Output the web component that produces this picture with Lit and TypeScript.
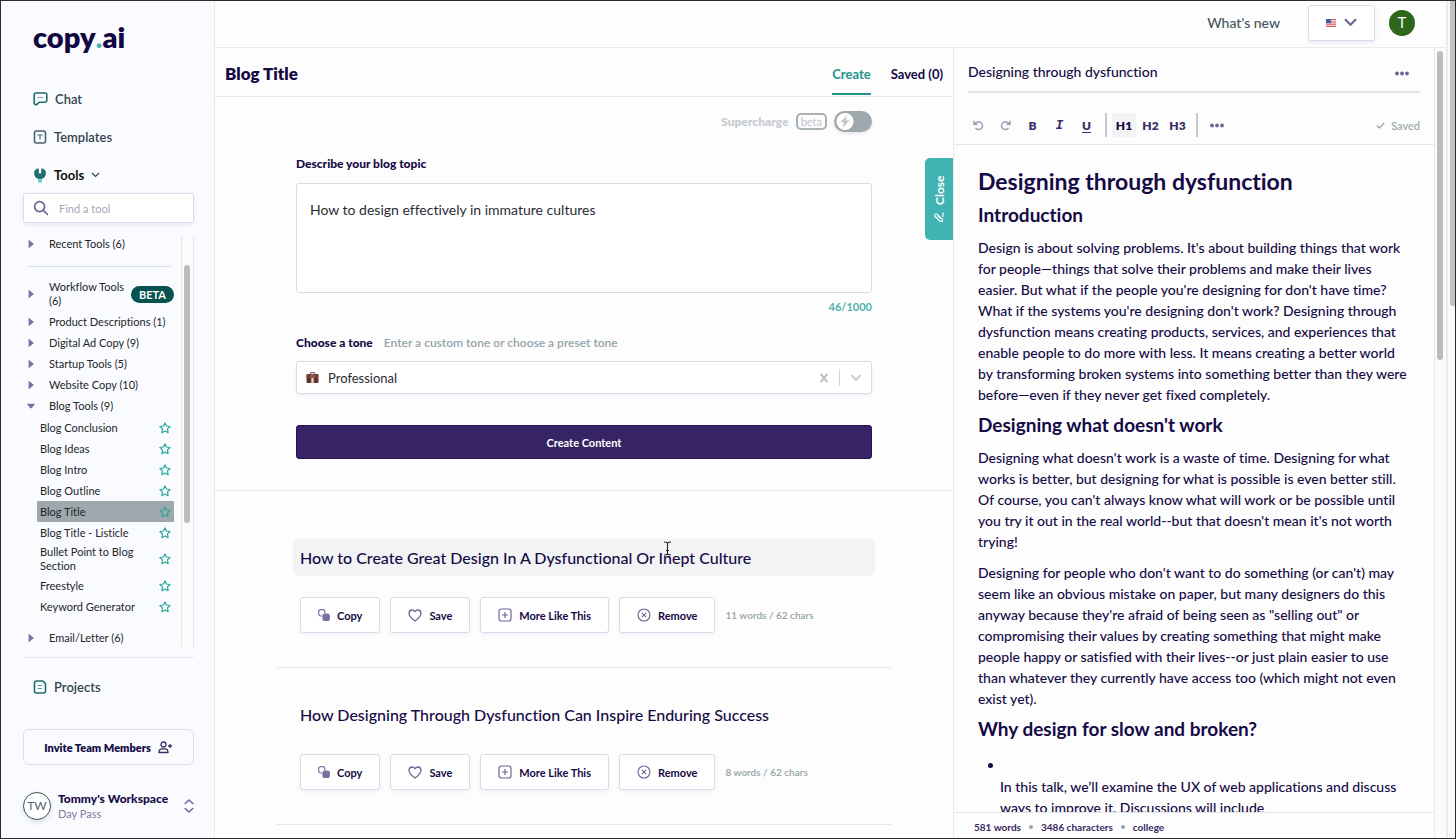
import { LitElement, html, css, nothing } from "lit";
import { customElement, state } from "lit/decorators.js";
import { classMap } from "lit/directives/class-map.js";

const star = html`<svg class="star" width="12" height="12" viewBox="0 0 12 12" fill="none" stroke="#2aa79b" stroke-width="1.200" stroke-linejoin="round"><path d="M6 .9 7.500 4l3.600.5-2.600 2.400.6 3.800L6 9 2.900 10.700l.6-3.800L.9 4.500 4.500 4z"/></svg>`;
const caretRight = html`<svg width="8" height="8" viewBox="0 0 8 8" fill="#7a70a0"><path d="M1.600.6Q1.600-.2 2.300.3L6.300 3.400Q7 4 6.300 4.600L2.300 7.700Q1.600 8.200 1.600 7.400z"/></svg>`;
const caretDown = html`<svg width="8" height="8" viewBox="0 0 8 8" fill="#7a70a0"><path d="M.4 1.800h7.200Q8.200 1.800 7.700 2.500L4.800 6Q4 6.800 3.200 6L.3 2.500Q-.2 1.800.4 1.800z"/></svg>`;
const dots = (c: string) => html`<svg width="14" height="5" viewBox="0 0 14 5" fill=${c}><circle cx="2" cy="2.500" r="1.900"/><circle cx="7" cy="2.500" r="1.900"/><circle cx="12" cy="2.500" r="1.900"/></svg>`;

const chatIcon = html`<svg width="15" height="14" viewBox="0 0 15 14" fill="none" stroke="#1d6e6b" stroke-width="1.600" stroke-linejoin="round"><path d="M2.800 1h9.400a1.600 1.600 0 0 1 1.600 1.600v6a1.600 1.600 0 0 1-1.600 1.600H6.500L3.600 12.600Q1.200 13 1.200 11V2.600A1.600 1.600 0 0 1 2.800 1z"/><path d="M4.300 5.500h6" stroke="#7fb0ad" stroke-width="1.200"/></svg>`;
const templateIcon = html`<svg width="14" height="14" viewBox="0 0 14 14" fill="none" stroke="#476374" stroke-width="1.600"><rect x="1.500" y="1" width="11" height="12" rx="2"/><path d="M4.500 5h5M7 5v4.500" stroke="#6f98a3"/></svg>`;
const toolsIcon = html`<svg width="14" height="15" viewBox="0 0 14 15"><path d="M5 8h4v5.500a1 1 0 0 1-1 1H6a1 1 0 0 1-1-1z" fill="#63d0c0"/><path d="M3.500.8 5.800.5V5q1.200 1 2.400 0V.5l2.300.3Q13 2.500 12.900 5.500 12.500 9.800 9 10.800H5Q1.500 9.800 1.100 5.500 1 2.500 3.500.8z" fill="#1f6f6c"/></svg>`;
const projectIcon = html`<svg width="14" height="14" viewBox="0 0 14 14" fill="none" stroke="#1d6e6b" stroke-width="1.600"><path d="M3.500 1h6.300L12.500 3.700V11a2 2 0 0 1-2 2h-7a2 2 0 0 1-2-2V3a2 2 0 0 1 2-2z"/><path d="M4.500 5.500h4.500M4.500 8.500h4.500" stroke="#5fa3a0" stroke-width="1.200"/></svg>`;
const searchIcon = html`<svg width="16" height="16" viewBox="0 0 16 16" fill="none" stroke="#6f6495" stroke-width="1.700" stroke-linecap="round"><circle cx="6.600" cy="6.600" r="5"/><path d="m10.300 10.300 4.200 4.200"/></svg>`;

const copyIcon = html`<svg width="12" height="12" viewBox="0 0 12 12" fill="none" stroke="#796fa0" stroke-width="1.200"><path d="M4.400 7H2.900Q.7 7 .7 4.800V2.700Q.7.7 2.700.7h2.100q2 0 2 2v1.900"/><rect x="5" y="5.200" width="6.300" height="6.300" rx="1.800" fill="#796fa0"/></svg>`;
const heartIcon = html`<svg width="14" height="13" viewBox="0 0 14 13" fill="none" stroke="#6f6495" stroke-width="1.300" stroke-linejoin="round"><path d="M7 12Q1 8 1 4.300 1.200 1 4 1 6 1 7 2.800 8 1 10 1q2.800 0 3 3.300Q13 8 7 12z"/></svg>`;
const plusIcon = html`<svg width="14" height="14" viewBox="0 0 14 14" fill="none" stroke="#6f6495" stroke-width="1.200"><rect x="1" y="1" width="12" height="12" rx="2.500"/><path d="M7 4v6M4 7h6"/></svg>`;
const removeIcon = html`<svg width="14" height="14" viewBox="0 0 14 14" fill="none" stroke="#6f6495" stroke-width="1.100"><circle cx="7" cy="7" r="6"/><path d="m4.900 4.900 4.200 4.200M9.100 4.900 4.900 9.100"/></svg>`;

interface Result {
  title: string;
  meta: string;
  active?: boolean;
}

@customElement("tool-sidebar")
export class ToolSidebar extends LitElement {
  static styles = css`
    * { box-sizing: border-box; }
    :host {
      display: flex; flex-direction: column; min-height: 0; padding: 0 20px 18px 22px;
      background: #fafbfe; border-right: 1px solid #dfeee6; color: #34454d;
    }
    button, input { font: inherit; color: inherit; background: none; border: 0; padding: 0; margin: 0; }
    a { color: inherit; text-decoration: none; }
    .logo { margin: 18px 0 0 10px; font-size: 29px; line-height: 36px; font-weight: 800; color: #100641; }
    .logo .dot { color: #3fb5b3; font-weight: 900; }
    .nav { display: flex; flex-direction: column; gap: 18px; margin-top: 34px; padding-left: 10px; }
    .nav-item { display: flex; align-items: center; gap: 7px; height: 20px; font-size: 13px; line-height: 20px; font-weight: 600; }
    .nav-item svg { flex: none; }
    .nav-item.current { color: #0d0d0d; font-weight: 700; }
    .search {
      display: flex; align-items: center; gap: 10px; height: 30px; margin-top: 8px; padding: 0 9px;
      background: #fff; border: 1px solid #dcd9e8; border-radius: 3px; box-shadow: 0 2px 5px #e4e9f4;
    }
    .search input { flex: 1; min-width: 0; font-size: 11px; outline: 0; }
    .search input::placeholder { color: #a9a5b8; opacity: 1; }
    .list { flex: 1; min-height: 0; display: flex; margin-top: 13px; }
    .tree { flex: 1; min-width: 0; overflow: hidden; padding: 0 7px 0 4px; color: #222629; font-size: 11px; }
    .track { width: 13px; border: solid #e4e6ea; border-width: 0 1px; padding: 29px 3px 0 2px; background: #fbfbfb; }
    .thumb { height: 258px; border-radius: 3px; background: #bdbdbd; }
    .cat { display: flex; align-items: center; gap: 14px; width: 100%; height: 21px; line-height: 14px; text-align: left; }
    .cat svg { flex: none; }
    .cat.first { height: 16px; }
    .cat.tall { height: 30px; margin-bottom: 2px; }
    .cat.last { margin-top: 10px; }
    .cat .label { flex: 1; white-space: nowrap; }
    .cat.tall .label { white-space: normal; }
    .beta { padding: 0 8px; margin-left: -9px; height: 17px; line-height: 17px; border-radius: 9px; background: #07514f; color: #fff; font-weight: 700; }
    .rule { border: 0; border-top: 1px solid #d9dfea; margin: 14px 3px 12px 0; }
    .tools { list-style: none; margin: 1px 0 0; padding: 0 0 0 10px; }
    .tool { display: flex; align-items: center; justify-content: space-between; min-height: 21px; padding: 0 3px; line-height: 14px; }
    .tool a { max-width: 96px; }
    .tool.wrap { min-height: 32px; }
    .tool.sel { background: #9fa8ad; border-radius: 1px; }
    .foot { margin-top: 10px; padding-top: 19px; border-top: 1px solid #e3e7ef; }
    .projects { padding-left: 10px; }
    .invite {
      display: flex; align-items: center; justify-content: center; gap: 7px; width: 100%; height: 36px; margin-top: 32px;
      border: 1px solid #e2dee9; border-radius: 6px; font-size: 11px; font-weight: 800; color: #150a45;
    }
    .workspace { display: flex; align-items: center; width: 100%; margin-top: 26px; height: 29px; text-align: left; }
    .avatar { width: 28px; height: 28px; flex: none; border: 1px solid #41555c; border-radius: 50%; background: #fff; box-shadow: 0 2px 5px #d5dde4; display: grid; place-items: center; font-size: 12px; color: #54666e; }
    .who { flex: 1; margin-left: 7px; white-space: nowrap; }
    .name { display: block; font-size: 12px; line-height: 16px; font-weight: 900; color: #150a45; }
    .plan { display: block; font-size: 11px; line-height: 14px; color: #8078a3; }
  `;

  private cats = ["Product Descriptions (1)", "Digital Ad Copy (9)", "Startup Tools (5)", "Website Copy (10)"];
  private tools = ["Blog Conclusion", "Blog Ideas", "Blog Intro", "Blog Outline", "Blog Title", "Blog Title - Listicle", "Bullet Point to Blog Section", "Freestyle", "Keyword Generator"];

  render() {
    return html`
      <div class="logo">copy<span class="dot">.</span>ai</div>
      <nav class="nav">
        <a class="nav-item" href="#chat">${chatIcon}Chat</a>
        <a class="nav-item" href="#templates">${templateIcon}<span>Templates</span></a>
        <a class="nav-item current" href="#tools">${toolsIcon}<span>Tools</span>
          <svg width="9" height="6" viewBox="0 0 9 6" fill="none" stroke="#34454d" stroke-width="1.200"><path d="m1 1 3.500 3.500L8 1"/></svg></a>
      </nav>
      <label class="search">${searchIcon}<input type="text" placeholder="Find a tool" aria-label="Find a tool" /></label>
      <div class="list">
        <div class="tree">
          <button class="cat first">${caretRight}<span class="label">Recent Tools (6)</span></button>
          <hr class="rule" />
          <button class="cat tall">${caretRight}<span class="label">Workflow Tools (6)</span><span class="beta">BETA</span></button>
          ${this.cats.map((c) => html`<button class="cat">${caretRight}<span class="label">${c}</span></button>`)}
          <button class="cat">${caretDown}<span class="label">Blog Tools (9)</span></button>
          <ul class="tools">
            ${this.tools.map((t) => html`<li class=${classMap({ tool: true, sel: t === "Blog Title", wrap: t.startsWith("Bullet") })}><a href="#tool">${t}</a>${star}</li>`)}
          </ul>
          <button class="cat last">${caretRight}<span class="label">Email/Letter (6)</span></button>
        </div>
        <div class="track"><div class="thumb"></div></div>
      </div>
      <div class="foot">
        <a class="nav-item projects" href="#projects">${projectIcon}Projects</a>
        <button class="invite">Invite Team Members
          <svg width="15" height="13" viewBox="0 0 15 13" fill="none" stroke="#3a3063" stroke-width="1.300"><circle cx="5.500" cy="3.500" r="2.500"/><path d="M1 11.500Q1 7.800 4 7.800h3q3 0 3 3.700zM12 3v4M10 5h4"/></svg>
        </button>
        <button class="workspace">
          <span class="avatar">TW</span>
          <span class="who"><span class="name">Tommy's Workspace</span><span class="plan">Day Pass</span></span>
          <svg width="10" height="14" viewBox="0 0 10 14" fill="none" stroke="#6f6495" stroke-width="1.500" stroke-linecap="round" stroke-linejoin="round"><path d="M1.200 4.500 5 1l3.800 3.500M1.200 9.500 5 13l3.800-3.500"/></svg>
        </button>
      </div>`;
  }
}

@customElement("blog-workspace")
export class BlogWorkspace extends LitElement {
  static styles = css`
    * { box-sizing: border-box; }
    :host { display: flex; flex-direction: column; min-width: 0; min-height: 0; position: relative; color: #150a45; }
    button, input, textarea, select { font: inherit; color: inherit; background: none; border: 0; padding: 0; margin: 0; }
    .head { display: flex; justify-content: space-between; height: 49px; flex: none; padding: 0 10px; border-bottom: 1px solid #e1ede6; }
    h1 { margin: 0; font-size: 17px; line-height: 52px; font-weight: 800; }
    .tabs { display: flex; gap: 20px; padding-top: 4px; }
    .tab { height: 43px; padding-top: 2px; font-size: 13px; font-weight: 700; border-bottom: 2px solid transparent; }
    .tab.on { color: #22928b; border-color: #22928b; }
    .scroll { flex: 1; min-height: 0; overflow: hidden; }
    .form { padding: 14px 81px 31px; border-bottom: 1px solid #dfeee6; }
    .super { display: flex; align-items: center; justify-content: flex-end; gap: 7px; height: 21px; }
    .super-label { display: flex; align-items: center; gap: 7px; color: #c9cbd3; font-size: 12px; font-weight: 800; }
    .beta { height: 17px; line-height: 14px; padding: 0 3px; border: 2px solid #a8b1b6; border-radius: 5px; color: #c2c4cd; font-size: 11px; font-weight: 400; }
    .switch { position: relative; display: flex; width: 38px; height: 21px; }
    .switch input { appearance: none; width: 38px; height: 21px; border-radius: 11px; background: radial-gradient(circle at 11px 50%, #fff 8px, #9ea8ac 9px); box-shadow: 0 2px 3px #e8eaee; }
    .switch svg { position: absolute; left: 5px; top: 4px; pointer-events: none; }
    .field-label { display: block; margin: 24px 0 11px; font-size: 12px; line-height: 16px; font-weight: 900; }
    textarea { display: block; width: 100%; height: 110px; resize: none; padding: 15px 13px; border: 1px solid #dcd9e8; border-radius: 3px; font-size: 14px; line-height: 21px; color: #2a2c33; background: #fff; outline: 0; }
    .count { margin-top: 6px; text-align: right; font-size: 11px; line-height: 16px; font-weight: 700; color: #4cb3ae; }
    .tone-label { display: flex; gap: 11px; margin: 20px 0 10px; font-size: 12px; line-height: 16px; font-weight: 900; }
    .hint { font-weight: 600; color: #94a3ac; }
    .tone { display: flex; align-items: center; height: 33px; padding: 0 9px; border: 1px solid #dcd9e8; border-radius: 3px; background: #fff; box-shadow: 0 2px 4px #eef2f6; }
    .tone select { appearance: none; flex: 1; min-width: 0; margin-left: 9px; font-size: 13px; color: #2a2c33; outline: 0; }
    .tone .clear { display: flex; }
    .bar { width: 1px; height: 17px; margin: 0 10px; background: #d3d3d9; }
    .create { display: block; width: 100%; height: 34px; margin-top: 31px; border: 1px solid #241457; border-radius: 3px; background: #362465; color: #fff; font-size: 11px; font-weight: 700; }
    .results { padding: 20px 61px 0; }
    .result { padding: 28px 17px 34px; border-bottom: 1px solid #dfeee6; }
    .result h2 { position: relative; margin: 0; padding: 0 7px; border-radius: 5px; font-size: 16px; line-height: 37px; font-weight: 500; }
    .result h2.on { background: #f2f3f5; }
    .cursor { position: absolute; left: 370px; top: 2px; }
    .actions { display: flex; align-items: center; gap: 10px; margin-top: 21px; padding-left: 7px; }
    .act { display: flex; align-items: center; gap: 7px; height: 36px; padding: 0 17px; border: 1px solid #dcd9e8; border-radius: 3px; background: #fff; box-shadow: 0 2px 4px #eef2f6; font-size: 11px; font-weight: 700; white-space: nowrap; }
    .meta { font-size: 10px; font-weight: 600; color: #94a3a8; white-space: nowrap; }
    .close { position: absolute; right: 0; top: 110px; display: flex; align-items: center; justify-content: center; gap: 7px; width: 28px; height: 82px; border-radius: 0 5px 5px 0; background: #40b3b2; color: #fff; writing-mode: vertical-rl; transform: rotate(180deg); font-size: 12px; font-weight: 700; }
    .close svg { transform: rotate(90deg); }
  `;

  @state() private topic = "How to design effectively in immature cultures";
  private results: Result[] = [
    { title: "How to Create Great Design In A Dysfunctional Or Inept Culture", meta: "11 words / 62 chars", active: true },
    { title: "How Designing Through Dysfunction Can Inspire Enduring Success", meta: "8 words / 62 chars" },
  ];

  private onInput(e: Event) {
    this.topic = (e.target as HTMLTextAreaElement).value;
  }

  render() {
    return html`
      <div class="head">
        <h1>Blog Title</h1>
        <div class="tabs"><button class="tab on">Create</button><button class="tab">Saved (0)</button></div>
      </div>
      <div class="scroll">
        <div class="form">
          <div class="super">
            <label class="super-label" for="super">Supercharge <span class="beta">beta</span></label>
            <span class="switch"><input id="super" type="checkbox" role="switch" />
              <svg width="12" height="13" viewBox="0 0 12 13" fill="#c3c3c7"><path d="M8 .5 1.200 7.200h3.600L3.500 12.500 10.800 5.500H7z"/></svg></span>
          </div>
          <label class="field-label" for="topic">Describe your blog topic</label>
          <textarea id="topic" .value=${this.topic} @input=${this.onInput}></textarea>
          <div class="count">${this.topic.length}/1000</div>
          <label class="tone-label" for="tone">Choose a tone <span class="hint">Enter a custom tone or choose a preset tone</span></label>
          <div class="tone">
            <svg width="13" height="13" viewBox="0 0 13 13"><path d="M4.500 3V1.600h4V3" fill="none" stroke="#6e5a55"/><rect x=".5" y="3" width="12" height="9" rx="1" fill="#6b3a2c"/><rect x=".5" y="3" width="12" height="4" rx="1" fill="#8a5645"/><path d="M2.800 3v9M10.200 3v9" stroke="#47241b"/><rect x="5.300" y="7" width="2.400" height="5" fill="#d8cfd0"/></svg>
            <select id="tone"><option>Professional</option></select>
            <button class="clear" aria-label="Clear"><svg width="10" height="10" viewBox="0 0 10 10" fill="none" stroke="#c0c0c4" stroke-width="2"><path d="m1.500 .8 7 8.400M8.500 .8l-7 8.400"/></svg></button>
            <span class="bar"></span>
            <svg width="12" height="8" viewBox="0 0 12 8" fill="none" stroke="#c6c6ca" stroke-width="1.800"><path d="m1.500 1.200 4.500 4.600 4.500-4.600"/></svg>
          </div>
          <button class="create">Create Content</button>
        </div>
        <div class="results">
          ${this.results.map((r) => html`
            <article class="result">
              <h2 class=${classMap({ on: !!r.active })}>${r.title}${r.active ? html`<svg class="cursor" width="9" height="15" viewBox="0 0 9 15" fill="none" stroke="#26262b" stroke-width="1.100"><path d="M1 1q2.500 0 3.500 1.200Q5.500 1 8 1M4.500 2v11M1 14q2.500 0 3.500-1.200Q5.500 14 8 14M3 9.500h3"/></svg>` : nothing}</h2>
              <div class="actions">
                <button class="act">${copyIcon}Copy</button>
                <button class="act">${heartIcon}Save</button>
                <button class="act">${plusIcon}More Like This</button>
                <button class="act">${removeIcon}Remove</button>
                <span class="meta">${r.meta}</span>
              </div>
            </article>`)}
        </div>
      </div>
      <button class="close"><svg width="11" height="11" viewBox="0 0 11 11" fill="none" stroke="#fff" stroke-width="1.100"><path d="M1.500 7.500 6.500 2q1.200-1 2.200 0t0 2.200L3.700 9.500H1.500zM3.700 9.500l3-4.800M6 10h4.500"/></svg>Close</button>`;
  }
}

@customElement("doc-editor")
export class DocEditor extends LitElement {
  static styles = css`
    * { box-sizing: border-box; }
    :host { display: flex; min-height: 0; border-left: 1px solid #dfeee6; color: #150a45; }
    button, input { font: inherit; color: inherit; background: none; border: 0; padding: 0; margin: 0; }
    .page { flex: 1; min-width: 0; display: flex; flex-direction: column; }
    .title { display: flex; align-items: center; flex: none; height: 45px; margin: 0 14px; padding: 4px 11px 0 0; border-bottom: 2px solid #e2e2e4; }
    .title input { flex: 1; min-width: 0; height: 24px; font-size: 14px; font-weight: 500; outline: 0; }
    .more { display: flex; margin-top: 4px; }
    .bar { display: flex; align-items: center; flex: none; padding: 20px 14px 7px 11px; border-bottom: 1px solid #e1ebe6; }
    .tb { width: 27px; height: 24px; display: grid; place-items: center; font-size: 12px; font-weight: 800; color: #3a2d68; border-radius: 3px; }
    .tb.on { width: 24px; margin-right: 1px; background: #f2f3f5; color: #150a45; }
    .tb.i { font-family: "Liberation Mono", monospace; font-weight: 700; font-style: italic; font-size: 13px; }
    .tb.u { text-decoration: underline; text-underline-offset: 2px; }
    .tb.hist { opacity: .55; }
    .sep { width: 2px; height: 24px; margin: 0 5px; background: #c4cbcf; }
    .saved { display: flex; align-items: center; gap: 6px; margin-left: auto; font-size: 11px; font-weight: 500; color: #94a3a8; }
    .doc { flex: 1; min-height: 0; overflow: hidden; padding: 22px 24px 0; font-size: 14px; line-height: 21px; font-weight: 500; }
    .doc h1 { margin: 0; font-size: 23px; line-height: 28px; font-weight: 700; }
    .doc h2 { margin: 8px 0 0; font-size: 19px; line-height: 24px; font-weight: 700; }
    .doc p { margin: 10px 0 0; }
    .doc ul { margin: 14px 0 0; padding-left: 22px; }
    .doc li { list-style: none; position: relative; padding-top: 21px; }
    .doc li p { margin: 0; }
    .doc li::before { content: ""; position: absolute; left: -12px; top: 8px; width: 5px; height: 5px; border-radius: 50%; background: #150a45; }
    .stats { display: flex; align-items: center; flex: none; height: 26px; padding: 2px 20px 0; gap: 8px; border-top: 1px solid #e1e8ea; font-size: 10px; font-weight: 700; color: #352a60; }
    .stats i { width: 4px; height: 4px; border-radius: 50%; background: #96a6ac; }
    .track { width: 12px; flex: none; padding: 3px 3px 0 2px; border-left: 1px solid #e6ebe8; background: #fbfbfb; }
    .thumb { height: 309px; border-radius: 3px; background: #bcbcbc; }
  `;

  render() {
    return html`
      <div class="page">
        <div class="title">
          <input type="text" aria-label="Document title" .value=${"Designing through dysfunction"} />
          <button class="more" aria-label="More">${dots("#6f6495")}</button>
        </div>
        <div class="bar">
          <button class="tb hist" aria-label="Undo"><svg width="11" height="11" viewBox="0 0 11 11" fill="none" stroke="#4d4470" stroke-width="1.400"><path d="M1 .8v3.400h3.600M1.300 4Q3.300 1.600 6 1.700a3.900 3.900 0 1 1-3.500 6.200"/></svg></button>
          <button class="tb hist" aria-label="Redo"><svg width="11" height="11" viewBox="0 0 11 11" fill="none" stroke="#4d4470" stroke-width="1.400"><path d="M10 .8v3.400H6.400M9.700 4Q7.700 1.600 5 1.700a3.900 3.900 0 1 0 3.500 6.200"/></svg></button>
          <button class="tb">B</button><button class="tb i">I</button><button class="tb u">U</button>
          <span class="sep"></span>
          <button class="tb on">H1</button><button class="tb">H2</button><button class="tb">H3</button>
          <span class="sep"></span>
          <button class="tb" aria-label="More formatting">${dots("#6f6495")}</button>
          <span class="saved"><svg width="9" height="7" viewBox="0 0 9 7" fill="none" stroke="#8c9da3" stroke-width="1.200"><path d="m.8 3.600 2.600 2.400L8.300.8"/></svg>Saved</span>
        </div>
        <div class="doc">
          <h1>Designing through dysfunction</h1>
          <h2>Introduction</h2>
          <p>Design is about solving problems. It's about building things that work for people—things that solve their problems and make their lives easier. But what if the people you're designing for don't have time? What if the systems you're designing don't work? Designing through dysfunction means creating products, services, and experiences that enable people to do more with less. It means creating a better world by transforming broken systems into something better than they were before—even if they never get fixed completely.</p>
          <h2>Designing what doesn't work</h2>
          <p>Designing what doesn't work is a waste of time. Designing for what works is better, but designing for what is possible is even better still. Of course, you can't always know what will work or be possible until you try it out in the real world--but that doesn't mean it's not worth trying!</p>
          <p>Designing for people who don't want to do something (or can't) may seem like an obvious mistake on paper, but many designers do this anyway because they're afraid of being seen as "selling out" or compromising their values by creating something that might make people happy or satisfied with their lives--or just plain easier to use than whatever they currently have access too (which might not even exist yet).</p>
          <h2>Why design for slow and broken?</h2>
          <ul><li><p>In this talk, we’ll examine the UX of web applications and discuss ways to improve it. Discussions will include</p></li></ul>
        </div>
        <div class="stats"><span>581 words</span><i></i><span>3486 characters</span><i></i><span>college</span></div>
      </div>
      <div class="track"><div class="thumb"></div></div>`;
  }
}

@customElement("app-root")
export class AppRoot extends LitElement {
  static styles = css`
    * { box-sizing: border-box; }
    :host {
      box-sizing: border-box; display: grid; grid-template-columns: 214px minmax(0, 1fr) 9px; height: 100vh;
      border: 1px solid #2b2a2d; background: #fdfdfd; overflow: hidden;
      font-family: Lato, "Liberation Sans", sans-serif; font-variant-ligatures: none;
    }
    .main { display: flex; flex-direction: column; min-height: 0; min-width: 0; }
    .top { display: flex; align-items: center; justify-content: flex-end; height: 47px; flex: none; padding: 0 31px 3px 0; border-bottom: 1px solid #e6ece9; }
    .top a { margin-right: 28px; font-size: 14px; color: #44545b; text-decoration: none; font-weight: 500; }
    .lang { display: flex; align-items: center; justify-content: center; gap: 8px; width: 67px; height: 36px; margin: 0; padding: 0; background: #fff; border: 1px solid #dcd9e8; border-radius: 3px; box-shadow: 0 2px 4px #e8edf3; }
    .user { width: 26px; height: 26px; margin: 0 0 0 14px; padding: 0; border: 0; border-radius: 50%; background: #2c671b; color: #fff; font: 400 15px Roboto, sans-serif; }
    .cols { flex: 1; min-height: 0; display: grid; grid-template-columns: minmax(0, 1fr) 493px; }
    .track { border-left: 2px solid #ebebeb; background: #fafafa; padding-left: 2px; }
    .thumb { height: 305px; background: #c1c1c1; border-radius: 0 0 0 3px; }
  `;

  render() {
    return html`
      <tool-sidebar></tool-sidebar>
      <div class="main">
        <header class="top">
          <a href="#new">What's new</a>
          <button class="lang" aria-label="Language">
            <svg width="10" height="8" viewBox="0 0 10 8"><rect width="10" height="8" rx="1" fill="#f3d9dc"/><path d="M0 .5h10M0 3h10M0 5.200h10M0 7.400h10" stroke="#e0525e"/><rect width="5" height="4.200" fill="#3c63a8"/></svg>
            <svg width="13" height="9" viewBox="0 0 13 9" fill="none" stroke="#6f6495" stroke-width="2.200"><path d="m1 1.200 5.500 5.500L12 1.200"/></svg>
          </button>
          <button class="user">T</button>
        </header>
        <div class="cols"><blog-workspace></blog-workspace><doc-editor></doc-editor></div>
      </div>
      <div class="track"><div class="thumb"></div></div>`;
  }
}
